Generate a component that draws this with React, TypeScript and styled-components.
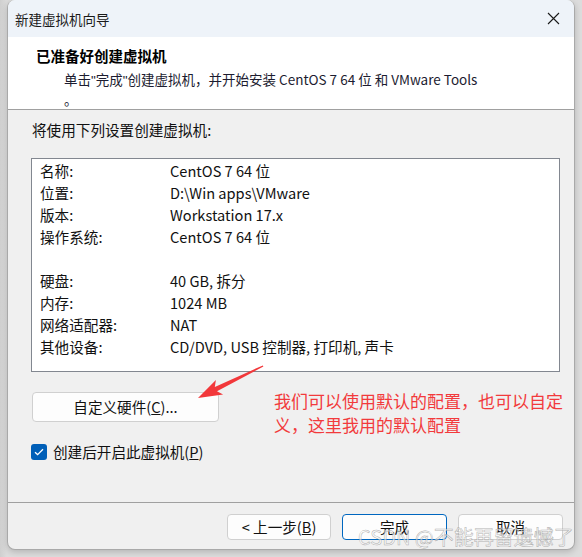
import React from "react";
import styled, { createGlobalStyle } from "styled-components";

const Global = createGlobalStyle`
  html, body { margin: 0; padding: 0; background: #d6d6d6; }
  body { font-family: "Noto Sans CJK SC", "Noto Sans", sans-serif; color: #111; }
  #root { width: 582px; height: 557px; overflow: hidden; }
`;

const Page = styled.div`
  width: 582px;
  height: 557px;
  padding-left: 7px;
  box-sizing: border-box;
  background: linear-gradient(90deg, #cfcfcf 0px, #dcdcdc 7px, #dcdcdc 100%);
`;

const Window = styled.div`
  position: relative;
  width: 568px;
  height: 550px;
  box-sizing: border-box;
  border: 1px solid #a9a9a9;
  border-top: none;
  border-radius: 8px;
  overflow: hidden;
  background: #f0f0f0;
  display: flex;
  flex-direction: column;
  box-shadow: 0 2px 6px rgba(0, 0, 0, 0.18);
`;

const TitleBar = styled.div`
  height: 37px;
  flex: none;
  background: #eef3f9;
  display: flex;
  align-items: center;
  justify-content: space-between;
  padding: 0 14px 0 7px;
  font-size: 13.5px;
  line-height: 18px;
  color: #1a1a1a;
`;

const CloseIcon = styled.svg`
  width: 13px;
  height: 13px;
  display: block;
`;

const Header = styled.div`
  height: 73px;
  flex: none;
  box-sizing: border-box;
  background: #ffffff;
  border-bottom: 1px solid #a0a0a0;
  padding: 9px 0 0 28px;
`;

const HeaderTitle = styled.div`
  font-size: 14.5px;
  font-weight: 700;
  line-height: 20px;
  color: #000;
`;

const HeaderSub = styled.div`
  margin: 4px 0 0 28px;
  font-size: 13.5px;
  line-height: 19px;
  color: #1c1c30;
`;

const Quote = styled.span`
  font-family: "Liberation Sans", sans-serif;
`;

const Body = styled.div`
  flex: 1;
  display: flex;
  flex-direction: column;
  padding: 10px 0 0 23px;
  font-size: 14.6px;
`;

const Intro = styled.div`
  line-height: 20px;
  padding-left: 1px;
`;

const ListBox = styled.div`
  margin-top: 18px;
  width: 529px;
  height: 214px;
  box-sizing: border-box;
  border: 1px solid #828790;
  background: #fff;
  padding: 1px 0 0 8px;
`;

const Row = styled.div<{ $gap?: boolean }>`
  display: grid;
  grid-template-columns: 130px 1fr;
  height: 22px;
  line-height: 22px;
  margin-top: ${(p) => (p.$gap ? "22px" : "0")};
`;

const ActionRow = styled.div`
  margin-top: 20px;
  display: flex;
  padding-left: 1px;
`;

const Button = styled.button<{ $primary?: boolean; $w: number; $h: number }>`
  width: ${(p) => p.$w}px;
  height: ${(p) => p.$h}px;
  box-sizing: border-box;
  background: #fdfdfd;
  border: 1px solid ${(p) => (p.$primary ? "#0067c0" : "#d0d0d0")};
  border-radius: 4px;
  font-family: inherit;
  font-size: 14.6px;
  color: #111;
  padding: 0;
  display: flex;
  align-items: center;
  justify-content: center;
  line-height: 18px;
`;

const Note = styled.div`
  position: absolute;
  left: 266px;
  top: 389px;
  width: 292px;
  font-size: 17px;
  line-height: 24px;
  color: #f23a3c;
`;

const CheckRow = styled.label`
  margin-top: 22px;
  display: flex;
  align-items: center;
  gap: 6px;
  line-height: 16px;
`;

const CheckBox = styled.span`
  width: 16px;
  height: 16px;
  border-radius: 3px;
  background: #005fb8;
  display: flex;
  align-items: center;
  justify-content: center;
`;

const Footer = styled.div`
  height: 47px;
  flex: none;
  box-sizing: border-box;
  border-top: 1px solid #a0a0a0;
  display: flex;
  justify-content: flex-end;
  align-items: flex-start;
  gap: 11px;
  padding: 11px 11px 0 0;
`;

const Overlay = styled.svg`
  position: absolute;
  left: 0;
  top: 0;
  width: 568px;
  height: 550px;
  pointer-events: none;
`;

const Watermark = styled.div`
  position: absolute;
  left: 350px;
  top: 524px;
  font-size: 20px;
  line-height: 26px;
  white-space: nowrap;
  color: rgba(250, 250, 250, 0.6);
  -webkit-text-stroke: 0.5px rgba(120, 120, 120, 0.6);
  pointer-events: none;
`;

const rows: [string, string, boolean?][] = [
  ["名称:", "CentOS 7 64 位"],
  ["位置:", "D:\\Win apps\\VMware"],
  ["版本:", "Workstation 17.x"],
  ["操作系统:", "CentOS 7 64 位"],
  ["硬盘:", "40 GB, 拆分", true],
  ["内存:", "1024 MB"],
  ["网络适配器:", "NAT"],
  ["其他设备:", "CD/DVD, USB 控制器, 打印机, 声卡"],
];

// arrow in page coords
const pts: [number, number][] = [
  [262.8, 365.4],
  [214.8, 386.9],
  [215.9, 380.1],
  [198, 398],
  [223.1, 394.4],
  [217, 391.3],
  [263.4, 366.6],
];

export default function App() {
  const arrow = pts.map(([x, y]) => `${x - 8},${y}`).join(" ");
  return (
    <>
      <Global />
      <Page>
        <Window>
          <TitleBar>
            <span>新建虚拟机向导</span>
            <CloseIcon viewBox="0 0 13 13">
              <path d="M1 1 L12 12 M12 1 L1 12" stroke="#1a1a1a" strokeWidth="1.1" fill="none" />
            </CloseIcon>
          </TitleBar>
          <Header>
            <HeaderTitle>已准备好创建虚拟机</HeaderTitle>
            <HeaderSub>
              单击<Quote>"</Quote>完成<Quote>"</Quote>创建虚拟机，并开始安装 CentOS 7 64 位 和 VMware Tools
              <br />。
            </HeaderSub>
          </Header>
          <Body>
            <Intro>将使用下列设置创建虚拟机:</Intro>
            <ListBox>
              {rows.map(([k, v, gap]) => (
                <Row key={k} $gap={gap}>
                  <span>{k}</span>
                  <span>{v}</span>
                </Row>
              ))}
            </ListBox>
            <ActionRow>
              <Button $w={187} $h={30}>
                自定义硬件(<u>C</u>)...
              </Button>
            </ActionRow>
            <CheckRow>
              <CheckBox>
                <svg width="10" height="8" viewBox="0 0 10 8">
                  <path d="M1 4.2 L3.6 6.6 L9 1.2" stroke="#fff" strokeWidth="1.3" fill="none" />
                </svg>
              </CheckBox>
              <span>
                创建后开启此虚拟机(<u>P</u>)
              </span>
            </CheckRow>
          </Body>
          <Footer>
            <Button $w={104} $h={26}>
              &lt; 上一步(<u>B</u>)
            </Button>
            <Button $w={105} $h={26} $primary>
              完成
            </Button>
            <Button $w={105} $h={26}>
              取消
            </Button>
          </Footer>
          <Note>我们可以使用默认的配置，也可以自定义，这里我用的默认配置</Note>
          <Overlay viewBox="0 0 568 550">
            <polygon points={arrow} fill="#f2373a" />
          </Overlay>
          <Watermark>CSDN @不能再留遗憾了</Watermark>
        </Window>
      </Page>
    </>
  );
}
